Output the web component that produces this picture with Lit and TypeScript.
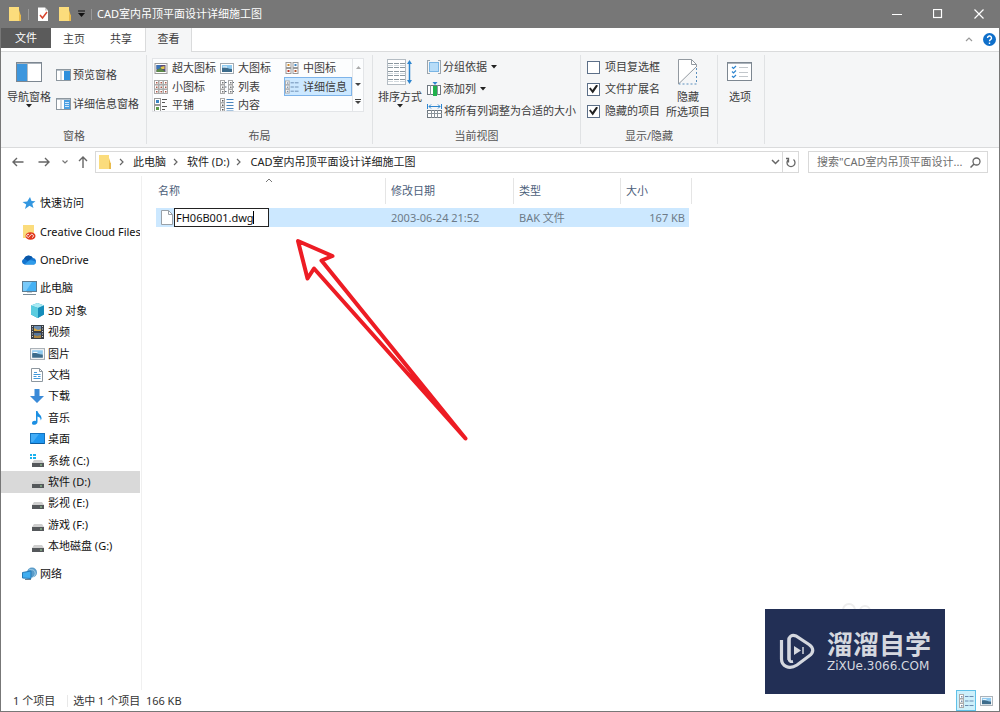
import { LitElement, html, svg, css, TemplateResult, SVGTemplateResult } from "lit";
import { customElement, property, state } from "lit/decorators.js";
import { classMap } from "lit/directives/class-map.js";

const ico = (w: number, h: number, body: SVGTemplateResult, vw = w, vh = h) =>
  html`<svg width=${w} height=${h} viewBox="0 0 ${vw} ${vh}" fill="none" aria-hidden="true">${body}</svg>`;

const caret = ico(6, 4, svg`<path d="M0 0h6L3 3.5z" fill="#222"/>`);

const folder = ico(14, 16, svg`
  <path d="M1 1h10v3l2 6v5H1z" fill="#f0c14e"/>
  <path d="M1 1h10v14H1z" fill="#fbdc7c"/>
  <path d="M11 9h2v6h-2z" fill="#e9bb4c"/>`);

const previewPane = ico(15, 12, svg`
  <rect x=".5" y=".5" width="14" height="11" fill="#fff" stroke="#8d979f"/>
  <path d="M1 1h13v1H1z" fill="#b9c2ca"/><path d="M5 2v9" stroke="#aab3bb"/>
  <rect x="8" y="2" width="6" height="9" fill="#2f8fdc"/>`);
const detailPane = ico(15, 12, svg`
  <rect x=".5" y=".5" width="14" height="11" fill="#fff" stroke="#8d979f"/>
  <path d="M1 1h13v1H1z" fill="#b9c2ca"/><path d="M5 2v9" stroke="#aab3bb"/>
  <rect x="8" y="2" width="6" height="9" fill="#4a9fe2"/>
  <path d="M9 4.500h4M9 6.500h4M9 8.500h4" stroke="#cfe6fa"/>`);
const navPane = ico(26, 20, svg`
  <rect x=".5" y=".5" width="25" height="19" fill="#fff" stroke="#7d8791"/>
  <path d="M1 1.500h24" stroke="#aab2ba"/><rect x="1" y="2" width="10" height="17" fill="#3d96dd"/>
  <path d="M11.500 2v17" stroke="#b4bcc3"/>`);

const cell = (x: number, y: number, c: string) => svg`
  <rect x=${x + 0.5} y=${y + 0.5} width="4" height="4" fill="#fff" stroke="#aaa"/>
  <rect x=${x + 2} y=${y + 2} width="1.500" height="1.500" fill=${c}/>`;
const picture = (w: number, h: number) => ico(w, h, svg`
  <rect x=".5" y=".5" width="13" height="10" fill="#fff" stroke="#a3abb2"/>
  <path d="M2 2h10v4H2z" fill="#8fcaf0"/><path d="M2 5c3-2 5 1 10 1v3H2z" fill="#3d6c8c"/>
  <path d="M3 4h4" stroke="#fff"/>`, 14, 11);
const xlIcon = ico(13, 11, svg`
  <rect x=".5" y=".5" width="12" height="10" fill="#fff" stroke="#9a9a9a"/>
  <path d="M2 2h9v7H2z" fill="#584a7c"/><path d="M2 2h4v4H2z" fill="#3a74b8"/>
  <path d="M6 4l4-1v3H7z" fill="#e7c94d"/><path d="M2 7l4-2 5 4H2z" fill="#5b8a48"/>`);
const mediumIcon = ico(13, 12, svg`
  <rect x=".5" y=".5" width="5" height="5" fill="#fff" stroke="#999"/><rect x="7.500" y=".5" width="5" height="5" fill="#fff" stroke="#999"/>
  <rect x=".5" y="6.500" width="5" height="5" fill="#fff" stroke="#999"/><rect x="7.500" y="6.500" width="5" height="5" fill="#fff" stroke="#999"/>
  <path d="M2 2h2v2H2z" fill="#d08a2c"/><path d="M9 2h2v2H9z" fill="#3a84c4"/><path d="M2 8h2v2H2z" fill="#c03a2b"/><path d="M9 8h2v2H9z" fill="#b4572e"/>`);
const smallIcon = ico(14, 14, svg`
  ${[0, 4.5, 9].map((y) => [0, 4.5, 9].map((x) => cell(x, y, "#b05a4a")))}`);
const listIcon = ico(14, 14, svg`
  ${[0, 4.5, 9].map((y) => [0, 8].map((x) => svg`${cell(x, y, "#777")}<path d="M${x + 5} ${y + 2.5}h1.500" stroke="#567"/>`))}`);
const detailsIcon = ico(15, 14, svg`
  ${[0, 4.5, 9].map((y) => svg`${cell(0, y, "#7a8fa8")}<path d="M6 ${y + 2.5}h3.500M10.500 ${y + 2.5}h4" stroke="#6b8bb0"/>`)}`);
const tileIcon = ico(14, 14, svg`
  <rect x=".5" y=".5" width="6" height="6" fill="#fff" stroke="#999"/><rect x=".5" y="7.500" width="6" height="6" fill="#fff" stroke="#999"/>
  <path d="M2 2h3v3H2z" fill="#3a84c4"/><path d="M2 9h3v3H2z" fill="#5b9a48"/>
  <path d="M8 1.500h5M8 4.500h3M8 8.500h5M8 11.500h3" stroke="#555"/>`);
const contentIcon = ico(14, 14, svg`
  ${[0, 4.5, 9].map((y) => cell(0, y, "#555"))}
  <path d="M6.500 1.500h7M6.500 4.500h7M6.500 7.500h7M6.500 10.500h7M6.500 13h7" stroke="#4c86be"/>`);

const sortIcon = ico(26, 27, svg`
  <rect x=".5" y=".5" width="18" height="25" fill="#fff" stroke="#b4bcc3"/>
  <path d="M1 4.500h17M1 8.500h17M1 12.500h17M1 16.500h17M1 20.500h17" stroke="#8b979f"/>
  <path d="M1 6.500h17M1 14.500h17M1 22.500h17" stroke="#d3dadf"/>
  <path d="M6.500 1v24M12.500 1v24" stroke="#fff"/>
  <path d="M22.500 3v20" stroke="#2f86cf" stroke-width="1.500"/><path d="M20 5l2.500-4L25 5zM20 21l2.500 4L25 21z" fill="#2f86cf"/>`);
const groupIcon = ico(14, 14, svg`
  <path d="M.5 0v14M13.500 0v14M0 .5h3M11 .5h3M0 13.500h3M11 13.500h3" stroke="#9ba5ad"/>
  <rect x="2.500" y="2.500" width="9" height="9" fill="#b7dcf8" stroke="#7ab5e4"/>`);
const addColIcon = ico(14, 14, svg`
  <rect x=".5" y="3.500" width="13" height="9" fill="#fff" stroke="#6f7880"/><path d="M3.500 3v10M10.500 3v10" stroke="#8b949b"/>
  <path d="M6 4h4v10H6z" fill="#21b14c"/><path d="M5.500 0h5L8 3z" fill="#2f86cf"/>`);
const fitIcon = ico(15, 14, svg`
  <path d="M.5 0v5M14.500 0v5M2 2.500h11M4 .5l-2 2 2 2M11 .5l2 2-2 2" stroke="#2f86cf"/>
  <rect x=".5" y="6.500" width="14" height="7" fill="#fff" stroke="#6f7880"/><path d="M0 9.500h15M4.500 6v8M7.500 6v8M10.500 6v8" stroke="#8b949b"/>`);
const hideIcon = ico(22, 28, svg`
  <path d="M1.500 26V1.500h13l5 5V9L1.500 26z" fill="#fff"/><path d="M1.500 26V1.500h13l5 5V9" stroke="#9299a0"/>
  <path d="M14.500 1.500v5h5" stroke="#9299a0"/><path d="M1.500 26L20 8" stroke="#9299a0"/>
  <path d="M19.500 10v16H2" stroke="#5b8fbd" stroke-dasharray="2 2"/>`);
const optionsIcon = ico(26, 20, svg`
  <rect x=".5" y=".5" width="24" height="18" fill="#fff" stroke="#7d8791"/><path d="M1 1.500h23" stroke="#aab2ba"/>
  <path d="M5 5l1.500 1.500L9 4M5 9.500L6.500 11 9 8.500M5 14l1.500 1.500L9 13" stroke="#2f86cf" stroke-width="1.200"/>
  <path d="M12 5.500h9M12 10.500h9M12 14.500h9" stroke="#c2c7cb"/>`);

const star = ico(14, 14, svg`<path d="M8 1l1.500 4 4 .2-3.200 2.600L11.500 12 7.500 9.800 3 13l1.200-4.500L.5 6l4.700-.5z" fill="#3397e0"/>`);
const ccFiles = ico(14, 16, svg`
  <path d="M1 1h11v13H1z" fill="#fbdc7c"/><path d="M10 9h2v5h-2z" fill="#e9bb4c"/>
  <ellipse cx="8.500" cy="12" rx="5" ry="3.800" fill="#e0381e"/>
  <path d="M10 13.500a1.600 1.600 0 1 0-1.500-2.500l-1 1.500a1.500 1.500 0 1 1-.5-2" stroke="#fff" stroke-width=".9"/>`);
const oneDrive = ico(16, 10, svg`
  <path d="M3.500 9.500A3 3 0 0 1 3 3.700 5 5 0 0 1 12 3a3.400 3.400 0 0 1 1 6.500z" fill="#1374cf"/>
  <path d="M3 3.700A5 5 0 0 1 11.500 2.500L7 6z" fill="#0a56a6"/><path d="M3.500 9.500L8 5.500c3-1 6 .5 7 2-.5 1.500-1.200 2-2.500 2z" fill="#2f9cea"/>`);
const pc = ico(15, 14, svg`
  <rect x=".5" y=".5" width="14" height="10" fill="#45b1f4" stroke="#5d7d93"/><path d="M1 1h9L4 10H1z" fill="#78cafa"/>
  <path d="M5 11h5v1H5z" fill="#c3ced6"/><path d="M1 13.500h13" stroke="#7a8b97"/>`);
const cube = ico(15, 15, svg`<path d="M7.500 0L14 2.500v9L7.500 15 1 11.500v-9z" fill="#2aa7c9"/><path d="M7.500 0L14 2.500 8 5 1 2.500z" fill="#a8e9f3"/><path d="M1 2.500L8 5v10L1 11.500z" fill="#5accdf"/><path d="M8 5l6-2.500v9L8 15z" fill="#168dba"/>`);
const video = ico(13, 14, svg`
  <path d="M0 0h13v14H0z" fill="#3b3f45"/><path d="M3 1h7v5H3z" fill="#6d8fb3"/><path d="M3 8h7v5H3z" fill="#55779e"/>
  <path d="M3 3l4 2 3-1v2H3z" fill="#d7a640"/><path d="M3 10l3 1 4-1v3H3z" fill="#a98543"/>
  <path d="M1.500 1v12M11.500 1v12" stroke="#cfd3d7" stroke-dasharray="1 1.500"/>`);
const docIcon = ico(12, 14, svg`
  <path d="M.5.5h8l3 3v10H.5z" fill="#fff" stroke="#8d979f"/><path d="M8.500.5v3h3" stroke="#8d979f"/>
  <path d="M3 4.500h3M2.500 6.500h7M2.500 8.500h3M7 8.500h2.500M2.500 10.500h7" stroke="#4299dc" stroke-width="1.200"/>`);
const download = ico(14, 14, svg`<path d="M4.500 0h5v7H14l-7 7-7-7h4.500z" fill="#3a8ad8"/>`);
const music = ico(12, 14, svg`<path d="M5 0h1.500c.5 3 4.500 4 4 8l-1 1.500C10 7 8.500 6 6.500 5.500V11c0 3-5.500 4-5.500 1.200C1 10 3.500 9.500 5 10z" fill="#1b8fe3"/>`);
const desktop = ico(15, 12, svg`<rect x=".5" y=".5" width="14" height="10" fill="#1f97f0" stroke="#1473bf"/><path d="M1 10.500h13" stroke="#0d5b9d"/><path d="M1 1h8L3 9H1z" fill="#43adf7"/>`);
const driveBody = svg`<path d="M4 6h8l2 3H2z" fill="#cfcfcf"/><path d="M2 9h12v4H2z" fill="#55585b"/><path d="M10 11h2" stroke="#9fdc9f"/>`;
const drive = ico(14, 14, driveBody);
const winDrive = ico(14, 14, svg`${driveBody}<path d="M0 0h2v2H0zM3 0h3v2H3zM0 3h2v2H0zM3 3h3v2H3z" fill="#19b2ef"/>`);
const network = ico(15, 14, svg`
  <circle cx="10" cy="5.500" r="5" fill="#5b9cc9"/><path d="M7 2c2 1 5 0 6 3s-1 4-2 5" stroke="#a5d1ea"/>
  <path d="M.5 5.500L9 4v7.500l-8.500-.5z" fill="#41aef0" stroke="#2779b5"/><path d="M3 12.500h6" stroke="#6b8495"/>`);
const fileIcon = ico(12, 15, svg`<path d="M.5.5h7l4 4v10H.5z" fill="#fff" stroke="#9aa1a8"/><path d="M7.500.5v4h4" stroke="#9aa1a8"/>`);

const chev = ico(5, 8, svg`<path d="M1 1l3 3-3 3" stroke="#666" stroke-width="1.200"/>`);

interface Place { label: string; icon: TemplateResult; }

const topPlaces: Place[] = [
  { label: "快速访问", icon: star },
  { label: "Creative Cloud Files", icon: ccFiles },
  { label: "OneDrive", icon: oneDrive },
];
const pcPlaces: Place[] = [
  { label: "3D 对象", icon: cube },
  { label: "视频", icon: video },
  { label: "图片", icon: picture(15, 12) },
  { label: "文档", icon: docIcon },
  { label: "下载", icon: download },
  { label: "音乐", icon: music },
  { label: "桌面", icon: desktop },
  { label: "系统 (C:)", icon: winDrive },
  { label: "软件 (D:)", icon: drive },
  { label: "影视 (E:)", icon: drive },
  { label: "游戏 (F:)", icon: drive },
  { label: "本地磁盘 (G:)", icon: drive },
];
const layouts: Place[] = [
  { label: "超大图标", icon: xlIcon },
  { label: "大图标", icon: picture(13, 11) },
  { label: "中图标", icon: mediumIcon },
  { label: "小图标", icon: smallIcon },
  { label: "列表", icon: listIcon },
  { label: "详细信息", icon: detailsIcon },
  { label: "平铺", icon: tileIcon },
  { label: "内容", icon: contentIcon },
];

const base = css`
  * { box-sizing: border-box; }
  svg { display: block; flex: none; }
  button, input {
    font: inherit; color: inherit; background: none; border: 0; padding: 0; margin: 0; outline: 0;
  }
  button { display: flex; align-items: center; justify-content: center; white-space: nowrap; }
  a { color: inherit; text-decoration: none; white-space: nowrap; }
`;

@customElement("title-bar")
class TitleBar extends LitElement {
  static styles = [base, css`
    :host { display: flex; align-items: center; height: 28px; flex: none; background: #777; color: #fff; padding-left: 7px; }
    .quick { display: flex; align-items: center; gap: 6px; }
    .sep { width: 1px; height: 11px; background: #999; }
    .title { flex: 1; font-size: 11px; font-weight: 400; margin: 0 0 0 5px; white-space: nowrap; }
    .win { width: 41px; height: 28px; }
  `];
  render() {
    return html`
      <div class="quick">
        ${folder}<span class="sep"></span>
        <button aria-label="属性">${ico(17, 14, svg`<path d="M3 .5h7l3 3V14H3z" fill="#fff"/><path d="M10 .5v3h3z" fill="#ccc"/><path d="M5 8l2.500 3L12 5" stroke="#d8452e" stroke-width="1.500"/>`)}</button>
        <button aria-label="新建文件夹">${folder}</button>
        <button aria-label="自定义快速访问工具栏">${ico(7, 8, svg`<path d="M0 1h7" stroke="#111"/><path d="M0 3h7L3.500 7z" fill="#111"/>`)}</button>
        <span class="sep"></span>
      </div>
      <h1 class="title">CAD室内吊顶平面设计详细施工图</h1>
      <button class="win" aria-label="最小化">${ico(10, 10, svg`<path d="M0 5.500h10" stroke="#fff"/>`)}</button>
      <button class="win" aria-label="最大化">${ico(10, 10, svg`<rect x=".5" y=".5" width="8" height="8" stroke="#fff" stroke-width="1.200"/>`)}</button>
      <button class="win" aria-label="关闭">${ico(10, 10, svg`<path d="M.5.5l9 9M9.500.5l-9 9" stroke="#fff" stroke-width="1.200"/>`)}</button>`;
  }
}

@customElement("ribbon-group")
class RibbonGroup extends LitElement {
  @property() label = "";
  static styles = css`
    :host { display: flex; flex-direction: column; flex: none; border-right: 1px solid #e0e2e4; margin: 3px 0; }
    .body { display: flex; flex: 1; padding: 0 7px 0 5px; }
    :host([tight]) .body { padding-right: 4px; }
    .label { height: 16px; line-height: 16px; text-align: center; color: #555; white-space: nowrap; }
  `;
  render() {
    return html`<div class="body"><slot></slot></div><div class="label">${this.label}</div>`;
  }
}

@customElement("view-ribbon")
class ViewRibbon extends LitElement {
  @state() private layout = "详细信息";
  static styles = [base, css`
    :host { display: block; flex: none; color: #3c3c3c; }
    .tabs { display: flex; height: 24px; background: #fff; border-bottom: 1px solid #dadbdc; }
    .tab { height: 24px; padding: 0 12px 2px; }
    .tab.file { width: 50px; height: 20px; padding-bottom: 0; background: #5b5b5b; color: #fff; }
    .tab.home { width: 46px; }
    .tab.share { width: 48px; }
    .tab.active { width: 47px; background: #f5f6f7; border: 1px solid #dadbdc; border-width: 0 1px; }
    .spacer { flex: 1; }
    .help { width: 20px; }
    .groups { display: flex; height: 96px; padding-left: 1px; background: #f5f6f7; border-bottom: 1px solid #dadbdc; }
    .big { flex-direction: column; justify-content: flex-start; height: 64px; line-height: 15px; }
    .big .pic { display: flex; align-items: center; justify-content: center; height: 34px; flex: none; }
    .rows { display: flex; flex-direction: column; }
    .row { display: flex; align-items: center; justify-content: flex-start; gap: 2px; height: 22px; white-space: nowrap; }
    .row > svg + svg { margin-left: 2px; }
    .panes { padding: 9px 0 0 5px; gap: 7px; }
    .current { padding: 1px 0 0 5px; }
    .checks { padding: 1px 0 0 1px; }
    .gallery { display: flex; height: 54px; margin: 3px 1px 0 0; border: 1px solid #e3e5e8; background: #fcfdfe; }
    .grid { display: grid; grid-template-columns: 66px 65px 67px; grid-template-rows: 18px 19px 17px; padding-left: 1px; overflow: hidden; }
    .opt { justify-content: flex-start; gap: 4px; border: 1px solid transparent; margin-left: -1px; overflow: hidden; }
    .opt svg { width: 14px; }
    .opt.on { background: #cce8ff; border-color: #7eb4ea; }
    .scroll { display: flex; flex-direction: column; width: 11px; border-left: 1px solid #e3e5e8; }
    .scroll button { flex: 1; }
    .check { gap: 5px; }
    .check input { appearance: none; width: 13px; height: 13px; border: 1px solid #5c6f88; background: #fff; display: grid; place-items: center; }
    .check input:checked::before { content: ""; width: 9px; height: 9px; background: #222; clip-path: polygon(0 45%, 18% 32%, 38% 60%, 82% 0, 100% 15%, 42% 100%); }
    .hide { margin-left: 6px; }
    .wide { width: 34px; }
  `];
  render() {
    return html`
      <nav class="tabs">
        <button class="tab file">文件</button>
        <button class="tab home">主页</button>
        <button class="tab share">共享</button>
        <button class="tab active">查看</button>
        <span class="spacer"></span>
        <button class="help" aria-label="最小化功能区">${ico(8, 5, svg`<path d="M1 4l3-3 3 3" stroke="#999" stroke-width="1.200"/>`)}</button>
        <button class="help" aria-label="帮助">${ico(13, 13, svg`<circle cx="6.500" cy="6.500" r="6.500" fill="#0f6fca"/><path d="M4.500 5a2 2 0 1 1 3 1.700c-.8.500-1 .8-1 1.600M6.500 9.500V11" stroke="#fff" stroke-width="1.400"/>`)}</button>
      </nav>
      <div class="groups">
        <ribbon-group label="窗格">
          <button class="big"><span class="pic">${navPane}</span>导航窗格${caret}</button>
          <div class="rows panes">
            <button class="row">${previewPane}预览窗格</button>
            <button class="row">${detailPane}详细信息窗格</button>
          </div>
        </ribbon-group>
        <ribbon-group label="布局">
          <div class="gallery">
            <div class="grid">
              ${layouts.map((l) => html`<button class=${classMap({ opt: true, on: l.label === this.layout })}
                @click=${() => (this.layout = l.label)}>${l.icon}${l.label}</button>`)}
            </div>
            <div class="scroll">
              <button aria-label="上一行">${ico(5, 3, svg`<path d="M0 3h5L2.500 0z" fill="#aaa"/>`)}</button>
              <button aria-label="下一行">${ico(6, 3, svg`<path d="M0 0h6L3 3z" fill="#444"/>`)}</button>
              <button aria-label="更多">${ico(6, 6, svg`<path d="M0 .5h6" stroke="#444"/><path d="M0 2h6L3 5z" fill="#444"/>`)}</button>
            </div>
          </div>
        </ribbon-group>
        <ribbon-group label="当前视图" tight>
          <button class="big"><span class="pic">${sortIcon}</span>排序方式${caret}</button>
          <div class="rows current">
            <button class="row">${groupIcon}分组依据${caret}</button>
            <button class="row">${addColIcon}添加列${caret}</button>
            <button class="row">${fitIcon}将所有列调整为合适的大小</button>
          </div>
        </ribbon-group>
        <ribbon-group label="显示/隐藏">
          <div class="rows checks">
            <label class="row check"><input type="checkbox">项目复选框</label>
            <label class="row check"><input type="checkbox" checked>文件扩展名</label>
            <label class="row check"><input type="checkbox" checked>隐藏的项目</label>
          </div>
          <button class="big hide"><span class="pic">${hideIcon}</span><span>隐藏</span><span>所选项目</span></button>
        </ribbon-group>
        <ribbon-group label="">
          <button class="big wide"><span class="pic">${optionsIcon}</span>选项</button>
        </ribbon-group>
      </div>`;
  }
}

@customElement("address-bar")
class AddressBar extends LitElement {
  static styles = [base, css`
    :host { display: flex; align-items: center; height: 28px; flex: none; padding: 0 11px 0 4px; color: #222; }
    .nav { height: 20px; width: 26px; }
    .nav.small { width: 16px; }
    .nav.up { width: 20px; margin-right: 2px; }
    .path { display: flex; align-items: center; flex: 1; height: 22px; border: 1px solid #d9d9d9; padding-left: 2px; }
    .crumbs { display: flex; align-items: center; flex: 1; }
    .crumbs > svg { margin: 0 9px 0 7px; }
    .crumbs > svg:first-child { margin: 0; }
    .drop { width: 14px; height: 20px; }
    .refresh { width: 16px; height: 20px; border-left: 1px solid #d9d9d9; }
    .search { display: flex; align-items: center; width: 180px; height: 22px; margin-left: 9px; border: 1px solid #d9d9d9; padding: 0 6px 0 8px; }
    .search input { flex: 1; min-width: 0; }
    .search input::placeholder { color: #6d6d6d; opacity: 1; }
  `];
  render() {
    return html`
      <button class="nav" aria-label="后退">${ico(12, 10, svg`<path d="M11.500 5H1M5 1L1 5l4 4" stroke="#666" stroke-width="1.400"/>`)}</button>
      <button class="nav" aria-label="前进">${ico(12, 10, svg`<path d="M.5 5H11M7 1l4 4-4 4" stroke="#666" stroke-width="1.400"/>`)}</button>
      <button class="nav small" aria-label="最近位置">${ico(6, 4, svg`<path d="M.5.5L3 3 5.500.5" stroke="#777" stroke-width="1.200"/>`)}</button>
      <button class="nav up" aria-label="上移">${ico(10, 12, svg`<path d="M5 12V1M1 5l4-4 4 4" stroke="#666" stroke-width="1.400"/>`)}</button>
      <div class="path">
        <div class="crumbs">${folder}${chev}<a href="#">此电脑</a>${chev}<a href="#">软件 (D:)</a>${chev}<a href="#">CAD室内吊顶平面设计详细施工图</a></div>
        <button class="drop" aria-label="展开">${ico(9, 6, svg`<path d="M1 1l3.500 3.500L8 1" stroke="#666" stroke-width="1.500"/>`)}</button>
        <button class="refresh" aria-label="刷新">${ico(10, 11, svg`<path d="M7.500 2.500A4 4 0 1 1 2.500 2.500M2.500 5.500v-4H0" stroke="#666" stroke-width="1.300"/>`)}</button>
      </div>
      <label class="search"><input type="text" aria-label="搜索" placeholder='搜索"CAD室内吊顶平面设计...'>
        ${ico(11, 11, svg`<circle cx="6.500" cy="4.500" r="3.500" stroke="#666" stroke-width="1.300"/><path d="M4 7L.5 10.500" stroke="#666" stroke-width="1.500"/>`)}</label>`;
  }
}

@customElement("nav-tree")
class NavTree extends LitElement {
  @state() private current = "软件 (D:)";
  static styles = [base, css`
    :host { display: block; width: 139px; flex: none; padding-top: 13px; color: #111; overflow: hidden; }
    .item { display: flex; align-items: center; gap: 3px; height: 28px; padding-left: 20px; overflow: hidden; }
    .pic { display: flex; justify-content: center; width: 16px; flex: none; }
    .top { display: grid; height: 86px; grid-auto-rows: 1fr; }
    .item.pc { height: 25px; }
    .drives { display: grid; height: 257px; grid-auto-rows: 1fr; }
    .drives .item { height: auto; padding-left: 28px; }
    .drives .item.on { background: #d9d9d9; }
    .item.net { margin-top: 3px; }
  `];
  row(p: Place, cls = "") {
    return html`<a href="#" class="item ${cls} ${p.label === this.current ? "on" : ""}"
      @click=${() => (this.current = p.label)}><span class="pic">${p.icon}</span>${p.label}</a>`;
  }
  render() {
    return html`
      <div class="top">${topPlaces.map((p) => this.row(p))}</div>
      ${this.row({ label: "此电脑", icon: pc }, "pc")}
      <div class="drives">${pcPlaces.map((p) => this.row(p))}</div>
      ${this.row({ label: "网络", icon: network }, "net")}`;
  }
}

@customElement("file-list")
class FileList extends LitElement {
  static styles = [base, css`
    :host { display: block; flex: 1; border-left: 1px solid #f0f0f0; padding: 2px 0 0 14px; }
    table { border-collapse: separate; border-spacing: 0; table-layout: fixed; width: 536px; }
    .c-name { width: 230px; } .c-date { width: 128px; } .c-type { width: 107px; } .c-size { width: 71px; }
    th { position: relative; height: 26px; padding: 0 0 0 5px; text-align: left; font-weight: 400; color: #4c607a; border-right: 1px solid #e5e5e5; }
    th:first-child { padding-left: 2px; }
    .sort { position: absolute; top: 0; left: 109px; }
    td { height: 19px; padding: 0 0 0 5px; background: #cce8ff; color: #6d7b88; white-space: nowrap; }
    .gap td { height: 4px; background: none; }
    td:first-child { padding-left: 5px; }
    td.size { text-align: right; padding-right: 4px; border-right: 3px solid transparent; background-clip: padding-box; }
    .name { display: flex; align-items: center; gap: 1px; }
    .name input { width: 95px; height: 19px; padding: 0 1px 1px; border: 1px solid #222; background: #fff; color: #111; }
    .edit { position: relative; display: flex; }
    .cursor { position: absolute; left: 79px; top: 3px; width: 1px; height: 13px; background: #000; }
  `];
  render() {
    return html`<table>
      <colgroup><col class="c-name"><col class="c-date"><col class="c-type"><col class="c-size"></colgroup>
      <thead><tr>
        <th>名称<span class="sort">${ico(8, 5, svg`<path d="M1 4l3-3 3 3" stroke="#777"/>`)}</span></th>
        <th>修改日期</th><th>类型</th><th>大小</th></tr></thead>
      <tbody>
        <tr class="gap"><td colspan="4"></td></tr>
        <tr>
          <td><div class="name">${fileIcon}<span class="edit"><input aria-label="文件名" spellcheck="false" value="FH06B001.dwg"><i class="cursor"></i></span></div></td>
          <td>2003-06-24 21:52</td><td>BAK 文件</td><td class="size">167 KB</td>
        </tr>
      </tbody></table>`;
  }
}

@customElement("app-root")
class AppRoot extends LitElement {
  static styles = [base, css`
    :host {
      display: flex; flex-direction: column; position: relative; box-sizing: border-box; min-height: 100vh; overflow: hidden;
      background: #fff; border: 1px solid #777; border-top: 0;
      font: 11px/16px "Noto Sans", "Noto Sans CJK SC", sans-serif;
    }
    .main { display: flex; flex: 1; gap: 1px; }
    .status { display: flex; align-items: center; height: 21px; padding: 0 3px 0 12px; color: #333; }
    .status .count { padding-right: 12px; border-right: 1px solid #e8e8e8; margin-right: 5px; line-height: 12px; }
    .status .spacer { flex: 1; }
    .mode { width: 20px; height: 21px; border: 1px solid transparent; }
    .mode.on { background: #cdf0fb; border-color: #5fc1e8; }
    .arrow { position: absolute; left: 289px; top: 232px; }
    .ghost { position: absolute; right: 126px; bottom: 96px; }
    .brand {
      position: absolute; right: 54px; bottom: 17px; width: 180px; height: 85px;
      display: flex; align-items: center; gap: 12px; padding-left: 14px; background: #222f55; color: #d5d8df;
    }
    .words { display: flex; flex-direction: column; }
    .cn { font: bold 26px/28px "Liberation Sans", "Noto Sans CJK SC", sans-serif; white-space: nowrap; }
    .en { font: 12px/14px "DejaVu Sans", sans-serif; white-space: nowrap; }
  `];
  render() {
    return html`
      <title-bar></title-bar>
      <view-ribbon></view-ribbon>
      <address-bar></address-bar>
      <div class="main"><nav-tree></nav-tree><file-list></file-list></div>
      <footer class="status">
        <span class="count">1 个项目</span><span>选中 1 个项目&nbsp; 166 KB</span><span class="spacer"></span>
        <button class="mode on" aria-label="详细信息">${detailsIcon}</button>
        <button class="mode" aria-label="大缩略图">${picture(13, 10)}</button>
      </footer>
      <div class="arrow">${ico(186, 216, svg`
        <path d="M175.500 206.500L31.500 28.500l11-4.500L8 9l9.500 37.500 6.500-10L143 170z" stroke="#ed1c24" stroke-width="4" stroke-linejoin="round"/>
        <path d="M125 147l50.500 59.500L132 158z" fill="#ed1c24"/>`)}</div>
      <div class="ghost">${ico(34, 14, svg`<circle cx="10" cy="9" r="6" stroke="#eee" stroke-width="2"/><circle cx="26" cy="10" r="5" stroke="#eee" stroke-width="2"/>`)}</div>
      <div class="brand">
        ${ico(36, 38, svg`
          <path d="M10 27V7.500C10 3 13 1.500 17 3l13 8.500c5 3.500 5 8 0 11.500L18 32c-8 5-15.500 1-15.500-6V7" stroke="#d5d8df" stroke-width="3.200"/>
          <path d="M10 4.500V25c0 3 1.500 4 4 3.500" stroke="#d5d8df" stroke-width="3"/>
          <path d="M15 13l7 4.500-7 4.500z" fill="#d5d8df"/><path d="M24 14v7" stroke="#d5d8df" stroke-width="1.500"/>`)}
        <div class="words"><span class="cn">溜溜自学</span><span class="en">ZiXUe.3066.COM</span></div>
      </div>`;
  }
}
